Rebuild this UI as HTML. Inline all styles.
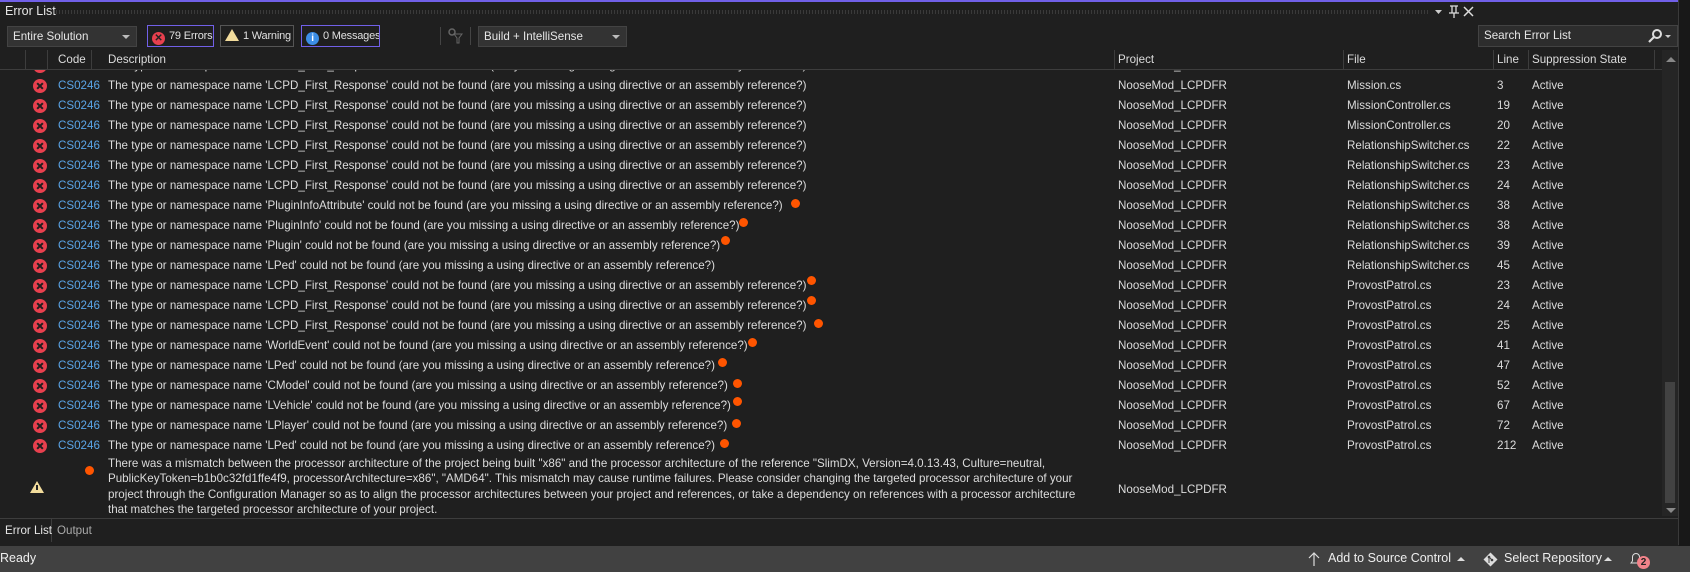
<!DOCTYPE html>
<html><head><meta charset="utf-8"><style>
*{box-sizing:border-box;margin:0;padding:0}
body{width:1690px;height:572px;background:#1f1f1f;font-family:"Liberation Sans",sans-serif;font-size:11.6px;color:#dcdcdc;position:relative;overflow:hidden}
.abs{position:absolute;white-space:nowrap}
.btn{position:absolute;top:25px;height:22px;border:1px solid #7160e8;line-height:20px;padding-left:4px;color:#e0e0e0;white-space:nowrap;overflow:hidden;font-size:11px;letter-spacing:-0.2px}
.combo{position:absolute;top:26px;height:21px;background:#333;border:1px solid #434343;line-height:19px;padding-left:5px;color:#e6e6e6;white-space:nowrap}
.caret{position:absolute;right:6px;top:8px;width:0;height:0;border-left:4px solid transparent;border-right:4px solid transparent;border-top:4px solid #bbb}
.hdr{position:absolute;top:52px;line-height:16px;color:#dcdcdc}
.sep{position:absolute;top:50px;height:19px;width:1px;background:#3d3d3d}
.row{position:relative;height:20px;line-height:20px;white-space:nowrap}
.row span{position:absolute}
.ic{left:33px;top:3px;width:14px;height:14px;border-radius:50%;background:#e8404e}
.ic:before,.ic:after{content:"";position:absolute;left:6px;top:3px;width:2px;height:8px;background:#1f1f1f;transform:rotate(45deg)}
.ic:after{transform:rotate(-45deg)}
.code{left:58px;color:#5aa4e6}
.desc{left:108px}
.proj{left:1118px}
.file{left:1347px}
.line{left:1497px}
.sup{left:1532px}
.dot{display:inline-block;width:9px;height:9px;border-radius:50%;background:#ff5500;vertical-align:1px;margin-left:4px}
</style></head><body>
<div class="abs" style="left:0;top:0;width:1678px;height:2px;background:#7160e8"></div>
<div class="abs" style="left:5px;top:4px;font-size:12.5px;color:#e6e6e6">Error List</div>
<div class="abs" style="left:52px;top:10px;width:1377px;height:4px;background-image:radial-gradient(#555 0.6px,transparent 0.8px);background-size:3px 2px"></div>
<svg class="abs" style="left:1434px;top:4px" width="40" height="16"><path d="M1 6h7l-3.5 4z" fill="#ccc"/><path d="M16 2h8M18 2v7h4V2M15 9h10M20 9v5" stroke="#ddd" fill="none" stroke-width="1.3"/><path d="M30 3l9 9M39 3l-9 9" stroke="#ddd" stroke-width="1.5"/></svg>

<div class="combo" style="left:7px;width:130px">Entire Solution<div class="caret"></div></div>
<div class="btn" style="left:147px;width:67px"><span style="display:inline-block;width:13px;height:13px;border-radius:50%;background:#e8404e;vertical-align:-2px;margin-right:4px;color:#222;font-size:10px;line-height:13px;text-align:center;font-weight:bold">✕</span>79 Errors</div>
<div class="btn" style="left:220px;width:74px;border-color:#555;"><span style="display:inline-block;width:0;height:0;border-left:7px solid transparent;border-right:7px solid transparent;border-bottom:12px solid #f2dc9c;vertical-align:-2px;margin-right:4px"></span>1 Warning</div>
<div class="btn" style="left:301px;width:79px"><span style="display:inline-block;width:13px;height:13px;border-radius:50%;background:#3c8ee6;vertical-align:-2px;margin-right:4px;color:#fff;font-size:10px;line-height:13px;text-align:center;font-weight:bold">i</span>0 Messages</div>
<div class="abs" style="left:440px;top:27px;width:1px;height:18px;background:#444"></div>
<svg class="abs" style="left:447px;top:28px" width="16" height="16"><circle cx="5" cy="4" r="3" stroke="#666" fill="none" stroke-width="1.5"/><path d="M7 6h8l-3 4v5h-2v-5z" stroke="#666" fill="none"/></svg>
<div class="abs" style="left:470px;top:27px;width:1px;height:18px;background:#444"></div>
<div class="combo" style="left:478px;width:149px">Build + IntelliSense<div class="caret"></div></div>
<div class="combo" style="left:1478px;width:200px;top:25px;height:22px;line-height:20px;background:#2d2d2d">Search Error List
<svg class="abs" style="right:6px;top:3px" width="24" height="14"><circle cx="10" cy="5" r="4" stroke="#ddd" fill="none" stroke-width="2"/><path d="M7 8l-5 5" stroke="#ddd" stroke-width="2.2"/><path d="M18 6h6l-3 3z" fill="#ccc"/></svg></div>

<div class="sep" style="left:25px"></div><div class="sep" style="left:47px"></div><div class="sep" style="left:91px"></div>
<div class="sep" style="left:1114px"></div><div class="sep" style="left:1343px"></div><div class="sep" style="left:1493px"></div><div class="sep" style="left:1528px"></div><div class="sep" style="left:1654px"></div>
<div class="hdr" style="left:58px">Code</div><div class="hdr" style="left:108px">Description</div><div class="hdr" style="left:1118px">Project</div><div class="hdr" style="left:1347px">File</div><div class="hdr" style="left:1497px">Line</div><div class="hdr" style="left:1532px">Suppression State</div>
<div class="abs" style="left:0;top:69px;width:1662px;height:1px;background:#3d3d3d"></div>

<div class="abs" style="left:0;top:70px;width:1662px;height:446px;overflow:hidden">
<div style="margin-top:-14px">
<div class="row"><span class="ic"></span><span class="code">CS0246</span><span class="desc">The type or namespace name 'LCPD_First_Response' could not be found (are you missing a using directive or an assembly reference?)</span><span class="proj">NooseMod_LCPDFR</span><span class="file">Mission.cs</span><span class="line">2</span><span class="sup">Active</span></div>
<div class="row"><span class="ic"></span><span class="code">CS0246</span><span class="desc">The type or namespace name 'LCPD_First_Response' could not be found (are you missing a using directive or an assembly reference?)</span><span class="proj">NooseMod_LCPDFR</span><span class="file">Mission.cs</span><span class="line">3</span><span class="sup">Active</span></div>
<div class="row"><span class="ic"></span><span class="code">CS0246</span><span class="desc">The type or namespace name 'LCPD_First_Response' could not be found (are you missing a using directive or an assembly reference?)</span><span class="proj">NooseMod_LCPDFR</span><span class="file">MissionController.cs</span><span class="line">19</span><span class="sup">Active</span></div>
<div class="row"><span class="ic"></span><span class="code">CS0246</span><span class="desc">The type or namespace name 'LCPD_First_Response' could not be found (are you missing a using directive or an assembly reference?)</span><span class="proj">NooseMod_LCPDFR</span><span class="file">MissionController.cs</span><span class="line">20</span><span class="sup">Active</span></div>
<div class="row"><span class="ic"></span><span class="code">CS0246</span><span class="desc">The type or namespace name 'LCPD_First_Response' could not be found (are you missing a using directive or an assembly reference?)</span><span class="proj">NooseMod_LCPDFR</span><span class="file">RelationshipSwitcher.cs</span><span class="line">22</span><span class="sup">Active</span></div>
<div class="row"><span class="ic"></span><span class="code">CS0246</span><span class="desc">The type or namespace name 'LCPD_First_Response' could not be found (are you missing a using directive or an assembly reference?)</span><span class="proj">NooseMod_LCPDFR</span><span class="file">RelationshipSwitcher.cs</span><span class="line">23</span><span class="sup">Active</span></div>
<div class="row"><span class="ic"></span><span class="code">CS0246</span><span class="desc">The type or namespace name 'LCPD_First_Response' could not be found (are you missing a using directive or an assembly reference?)</span><span class="proj">NooseMod_LCPDFR</span><span class="file">RelationshipSwitcher.cs</span><span class="line">24</span><span class="sup">Active</span></div>
<div class="row"><span class="ic"></span><span class="code">CS0246</span><span class="desc">The type or namespace name 'PluginInfoAttribute' could not be found (are you missing a using directive or an assembly reference?)<i class="dot" style="margin-left:8px"></i></span><span class="proj">NooseMod_LCPDFR</span><span class="file">RelationshipSwitcher.cs</span><span class="line">38</span><span class="sup">Active</span></div>
<div class="row"><span class="ic"></span><span class="code">CS0246</span><span class="desc">The type or namespace name 'PluginInfo' could not be found (are you missing a using directive or an assembly reference?)<i class="dot" style="margin-left:0;vertical-align:2px"></i></span><span class="proj">NooseMod_LCPDFR</span><span class="file">RelationshipSwitcher.cs</span><span class="line">38</span><span class="sup">Active</span></div>
<div class="row"><span class="ic"></span><span class="code">CS0246</span><span class="desc">The type or namespace name 'Plugin' could not be found (are you missing a using directive or an assembly reference?)<i class="dot" style="margin-left:1px;vertical-align:4px"></i></span><span class="proj">NooseMod_LCPDFR</span><span class="file">RelationshipSwitcher.cs</span><span class="line">39</span><span class="sup">Active</span></div>
<div class="row"><span class="ic"></span><span class="code">CS0246</span><span class="desc">The type or namespace name 'LPed' could not be found (are you missing a using directive or an assembly reference?)</span><span class="proj">NooseMod_LCPDFR</span><span class="file">RelationshipSwitcher.cs</span><span class="line">45</span><span class="sup">Active</span></div>
<div class="row"><span class="ic"></span><span class="code">CS0246</span><span class="desc">The type or namespace name 'LCPD_First_Response' could not be found (are you missing a using directive or an assembly reference?)<i class="dot" style="margin-left:1px;vertical-align:4px"></i></span><span class="proj">NooseMod_LCPDFR</span><span class="file">ProvostPatrol.cs</span><span class="line">23</span><span class="sup">Active</span></div>
<div class="row"><span class="ic"></span><span class="code">CS0246</span><span class="desc">The type or namespace name 'LCPD_First_Response' could not be found (are you missing a using directive or an assembly reference?)<i class="dot" style="margin-left:1px;vertical-align:4px"></i></span><span class="proj">NooseMod_LCPDFR</span><span class="file">ProvostPatrol.cs</span><span class="line">24</span><span class="sup">Active</span></div>
<div class="row"><span class="ic"></span><span class="code">CS0246</span><span class="desc">The type or namespace name 'LCPD_First_Response' could not be found (are you missing a using directive or an assembly reference?)<i class="dot" style="margin-left:8px"></i></span><span class="proj">NooseMod_LCPDFR</span><span class="file">ProvostPatrol.cs</span><span class="line">25</span><span class="sup">Active</span></div>
<div class="row"><span class="ic"></span><span class="code">CS0246</span><span class="desc">The type or namespace name 'WorldEvent' could not be found (are you missing a using directive or an assembly reference?)<i class="dot" style="margin-left:0;vertical-align:2px"></i></span><span class="proj">NooseMod_LCPDFR</span><span class="file">ProvostPatrol.cs</span><span class="line">41</span><span class="sup">Active</span></div>
<div class="row"><span class="ic"></span><span class="code">CS0246</span><span class="desc">The type or namespace name 'LPed' could not be found (are you missing a using directive or an assembly reference?)<i class="dot" style="margin-left:3px;vertical-align:2px"></i></span><span class="proj">NooseMod_LCPDFR</span><span class="file">ProvostPatrol.cs</span><span class="line">47</span><span class="sup">Active</span></div>
<div class="row"><span class="ic"></span><span class="code">CS0246</span><span class="desc">The type or namespace name 'CModel' could not be found (are you missing a using directive or an assembly reference?)<i class="dot" style="margin-left:5px"></i></span><span class="proj">NooseMod_LCPDFR</span><span class="file">ProvostPatrol.cs</span><span class="line">52</span><span class="sup">Active</span></div>
<div class="row"><span class="ic"></span><span class="code">CS0246</span><span class="desc">The type or namespace name 'LVehicle' could not be found (are you missing a using directive or an assembly reference?)<i class="dot" style="margin-left:2px;vertical-align:3px"></i></span><span class="proj">NooseMod_LCPDFR</span><span class="file">ProvostPatrol.cs</span><span class="line">67</span><span class="sup">Active</span></div>
<div class="row"><span class="ic"></span><span class="code">CS0246</span><span class="desc">The type or namespace name 'LPlayer' could not be found (are you missing a using directive or an assembly reference?)<i class="dot" style="margin-left:5px"></i></span><span class="proj">NooseMod_LCPDFR</span><span class="file">ProvostPatrol.cs</span><span class="line">72</span><span class="sup">Active</span></div>
<div class="row"><span class="ic"></span><span class="code">CS0246</span><span class="desc">The type or namespace name 'LPed' could not be found (are you missing a using directive or an assembly reference?)<i class="dot" style="margin-left:5px"></i></span><span class="proj">NooseMod_LCPDFR</span><span class="file">ProvostPatrol.cs</span><span class="line">212</span><span class="sup">Active</span></div>
</div>
<div class="abs" style="left:85px;top:396px;width:9px;height:9px;border-radius:50%;background:#ff5500"></div>
<div class="abs" style="left:30px;top:411px;width:0;height:0;border-left:7px solid transparent;border-right:7px solid transparent;border-bottom:12px solid #f2dc9c"></div>
<div class="abs" style="left:36px;top:415px;width:2px;height:5px;background:#222"></div>
<div class="abs" style="left:108px;top:386px;width:1000px;line-height:15.3px;white-space:nowrap">There was a mismatch between the processor architecture of the project being built "x86" and the processor architecture of the reference "SlimDX, Version=4.0.13.43, Culture=neutral,<br>PublicKeyToken=b1b0c32fd1ffe4f9, processorArchitecture=x86", "AMD64". This mismatch may cause runtime failures. Please consider changing the targeted processor architecture of your<br>project through the Configuration Manager so as to align the processor architectures between your project and references, or take a dependency on references with a processor architecture<br>that matches the targeted processor architecture of your project.</div>
<div class="abs" style="left:1118px;top:410px;line-height:20px">NooseMod_LCPDFR</div>
</div>

<div class="abs" style="left:1662px;top:50px;width:16px;height:466px;background:#252525"></div>
<div class="abs" style="left:1666px;top:57px;border-left:5px solid transparent;border-right:5px solid transparent;border-bottom:5px solid #888"></div>
<div class="abs" style="left:1665px;top:382px;width:10px;height:121px;background:#424242"></div>
<div class="abs" style="left:1666px;top:508px;border-left:5px solid transparent;border-right:5px solid transparent;border-top:5px solid #888"></div>
<div class="abs" style="left:0;top:518px;width:1678px;height:1px;background:#3d3d3d"></div>
<div class="abs" style="left:1678px;top:0;width:1px;height:545px;background:#3a3a3a"></div>
<div class="abs" style="left:1679px;top:0;width:11px;height:572px;background:#181818"></div>

<div class="abs" style="left:0;top:519px;width:52px;height:23px;background:#1f1f1f;border-right:1px solid #3d3d3d"></div>
<div class="abs" style="left:5px;top:524px;color:#e6e6e6">Error List</div>
<div class="abs" style="left:57px;top:524px;color:#aaa">Output</div>

<div class="abs" style="left:0;top:546px;width:1690px;height:26px;background:#414141"></div>
<div class="abs" style="left:0;top:551px;color:#eee;font-size:12.5px">Ready</div>
<svg class="abs" style="left:1307px;top:551px" width="14" height="16"><path d="M7 15V2M2 7l5-5 5 5" stroke="#ddd" fill="none" stroke-width="1.2"/></svg>
<div class="abs" style="left:1328px;top:551px;color:#eee;font-size:12.5px">Add to Source Control</div>
<div class="abs" style="left:1457px;top:557px;border-left:4px solid transparent;border-right:4px solid transparent;border-bottom:4px solid #ddd"></div>
<svg class="abs" style="left:1483px;top:552px" width="15" height="15"><path d="M7.5 0.5l7 7-7 7-7-7z" fill="#ddd"/><circle cx="6" cy="5" r="1.3" fill="#414141"/><circle cx="9" cy="8" r="1.3" fill="#414141"/><path d="M6 5v6M6 5l3 3" stroke="#414141"/></svg>
<div class="abs" style="left:1504px;top:551px;color:#eee;font-size:12.5px">Select Repository</div>
<div class="abs" style="left:1604px;top:557px;border-left:4px solid transparent;border-right:4px solid transparent;border-bottom:4px solid #ddd"></div>
<svg class="abs" style="left:1629px;top:551px" width="14" height="16"><path d="M2 12h10l-1.5-2V6a3.5 3.5 0 0 0-7 0v4z" stroke="#ddd" fill="none"/></svg>
<div class="abs" style="left:1637px;top:556px;width:13px;height:13px;border-radius:50%;background:#f2838a;color:#222;font-size:10px;line-height:13px;text-align:center;font-weight:bold">2</div>
</body></html>
